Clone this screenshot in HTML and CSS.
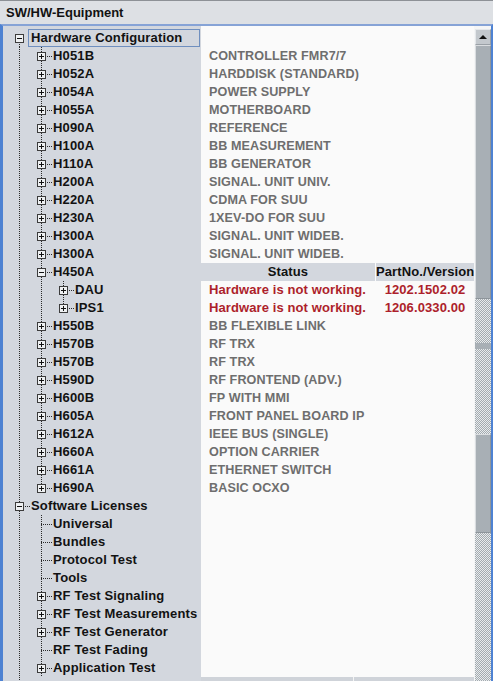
FILE: index.html
```html
<!DOCTYPE html>
<html>
<head>
<meta charset="utf-8">
<link rel="stylesheet" href="styles.css">
</head>
<body>
<div class="title">SW/HW-Equipment</div>
<div class="panel">
  <div class="list">
    <div class="row"><div class="tree"><span class="j first"><i class="box"></i></span><span class="lbl focus">Hardware Configuration</span></div><div class="val"></div></div>

    <div class="row"><div class="tree"><span class="g v"></span><span class="j tee"><i class="box plus"></i></span><span class="lbl">H051B</span></div><div class="val">CONTROLLER FMR7/7</div></div>
    <div class="row"><div class="tree"><span class="g v"></span><span class="j tee"><i class="box plus"></i></span><span class="lbl">H052A</span></div><div class="val">HARDDISK (STANDARD)</div></div>
    <div class="row"><div class="tree"><span class="g v"></span><span class="j tee"><i class="box plus"></i></span><span class="lbl">H054A</span></div><div class="val">POWER SUPPLY</div></div>
    <div class="row"><div class="tree"><span class="g v"></span><span class="j tee"><i class="box plus"></i></span><span class="lbl">H055A</span></div><div class="val">MOTHERBOARD</div></div>
    <div class="row"><div class="tree"><span class="g v"></span><span class="j tee"><i class="box plus"></i></span><span class="lbl">H090A</span></div><div class="val">REFERENCE</div></div>
    <div class="row"><div class="tree"><span class="g v"></span><span class="j tee"><i class="box plus"></i></span><span class="lbl">H100A</span></div><div class="val">BB MEASUREMENT</div></div>
    <div class="row"><div class="tree"><span class="g v"></span><span class="j tee"><i class="box plus"></i></span><span class="lbl">H110A</span></div><div class="val">BB GENERATOR</div></div>
    <div class="row"><div class="tree"><span class="g v"></span><span class="j tee"><i class="box plus"></i></span><span class="lbl">H200A</span></div><div class="val">SIGNAL. UNIT UNIV.</div></div>
    <div class="row"><div class="tree"><span class="g v"></span><span class="j tee"><i class="box plus"></i></span><span class="lbl">H220A</span></div><div class="val">CDMA FOR SUU</div></div>
    <div class="row"><div class="tree"><span class="g v"></span><span class="j tee"><i class="box plus"></i></span><span class="lbl">H230A</span></div><div class="val">1XEV-DO FOR SUU</div></div>
    <div class="row"><div class="tree"><span class="g v"></span><span class="j tee"><i class="box plus"></i></span><span class="lbl">H300A</span></div><div class="val">SIGNAL. UNIT WIDEB.</div></div>
    <div class="row"><div class="tree"><span class="g v"></span><span class="j tee"><i class="box plus"></i></span><span class="lbl">H300A</span></div><div class="val">SIGNAL. UNIT WIDEB.</div></div>
    <div class="row"><div class="tree"><span class="g v"></span><span class="j tee"><i class="box"></i></span><span class="lbl">H450A</span></div><div class="val hdr"><span class="c-status">Status</span><span class="c-part">PartNo./Version</span></div></div>
    <div class="row"><div class="tree"><span class="g v"></span><span class="g v"></span><span class="j tee"><i class="box plus"></i></span><span class="lbl">DAU</span></div><div class="val err"><span class="c-status">Hardware is not working.</span><span class="c-part">1202.1502.02</span></div></div>
    <div class="row"><div class="tree"><span class="g v"></span><span class="g v"></span><span class="j last"><i class="box plus"></i></span><span class="lbl">IPS1</span></div><div class="val err"><span class="c-status">Hardware is not working.</span><span class="c-part">1206.0330.00</span></div></div>
    <div class="row"><div class="tree"><span class="g v"></span><span class="j tee"><i class="box plus"></i></span><span class="lbl">H550B</span></div><div class="val">BB FLEXIBLE LINK</div></div>
    <div class="row"><div class="tree"><span class="g v"></span><span class="j tee"><i class="box plus"></i></span><span class="lbl">H570B</span></div><div class="val">RF TRX</div></div>
    <div class="row"><div class="tree"><span class="g v"></span><span class="j tee"><i class="box plus"></i></span><span class="lbl">H570B</span></div><div class="val">RF TRX</div></div>
    <div class="row"><div class="tree"><span class="g v"></span><span class="j tee"><i class="box plus"></i></span><span class="lbl">H590D</span></div><div class="val">RF FRONTEND (ADV.)</div></div>
    <div class="row"><div class="tree"><span class="g v"></span><span class="j tee"><i class="box plus"></i></span><span class="lbl">H600B</span></div><div class="val">FP WITH MMI</div></div>
    <div class="row"><div class="tree"><span class="g v"></span><span class="j tee"><i class="box plus"></i></span><span class="lbl">H605A</span></div><div class="val">FRONT PANEL BOARD IP</div></div>
    <div class="row"><div class="tree"><span class="g v"></span><span class="j tee"><i class="box plus"></i></span><span class="lbl">H612A</span></div><div class="val">IEEE BUS (SINGLE)</div></div>
    <div class="row"><div class="tree"><span class="g v"></span><span class="j tee"><i class="box plus"></i></span><span class="lbl">H660A</span></div><div class="val">OPTION CARRIER</div></div>
    <div class="row"><div class="tree"><span class="g v"></span><span class="j tee"><i class="box plus"></i></span><span class="lbl">H661A</span></div><div class="val">ETHERNET SWITCH</div></div>
    <div class="row"><div class="tree"><span class="g v"></span><span class="j last"><i class="box plus"></i></span><span class="lbl">H690A</span></div><div class="val">BASIC OCXO</div></div>

    <div class="row"><div class="tree"><span class="j tee"><i class="box"></i></span><span class="lbl">Software Licenses</span></div><div class="val"></div></div>
    <div class="row"><div class="tree"><span class="g v"></span><span class="j tee"></span><span class="lbl">Universal</span></div><div class="val"></div></div>
    <div class="row"><div class="tree"><span class="g v"></span><span class="j tee"></span><span class="lbl">Bundles</span></div><div class="val"></div></div>
    <div class="row"><div class="tree"><span class="g v"></span><span class="j tee"></span><span class="lbl">Protocol Test</span></div><div class="val"></div></div>
    <div class="row"><div class="tree"><span class="g v"></span><span class="j tee"></span><span class="lbl">Tools</span></div><div class="val"></div></div>
    <div class="row"><div class="tree"><span class="g v"></span><span class="j tee"><i class="box plus"></i></span><span class="lbl">RF Test Signaling</span></div><div class="val"></div></div>
    <div class="row"><div class="tree"><span class="g v"></span><span class="j tee"><i class="box plus"></i></span><span class="lbl">RF Test Measurements</span></div><div class="val"></div></div>
    <div class="row"><div class="tree"><span class="g v"></span><span class="j tee"><i class="box plus"></i></span><span class="lbl">RF Test Generator</span></div><div class="val"></div></div>
    <div class="row"><div class="tree"><span class="g v"></span><span class="j tee"></span><span class="lbl">RF Test Fading</span></div><div class="val"></div></div>
    <div class="row"><div class="tree"><span class="g v"></span><span class="j tee"><i class="box plus"></i></span><span class="lbl">Application Test</span></div><div class="val"></div></div>
    <div class="row strip"><div class="tree"><span class="g v"></span></div><div class="val"><span class="seg a"></span><span class="seg b"></span></div></div>
  </div>
  <div class="sb">
    <div class="sb-btn"><span class="tri"></span></div>
    <div class="sb-track">
      <div class="thumb t1"></div>
      <div class="gap g1"></div>
      <div class="band"></div>
      <div class="gap g2"></div>
      <div class="thumb t2"></div>
    </div>
  </div>
</div>
</body>
</html>
```

FILE: styles.css
```css
html, body {
  margin: 0;
  padding: 0;
}
body {
  width: 493px;
  height: 681px;
  overflow: hidden;
  background: #dcdfe3;
  font-family: "Liberation Sans", Arial, sans-serif;
  font-weight: bold;
  color: #121212;
}
.title {
  height: 23px;
  border-top: 1px solid #8d9196;
  line-height: 24px;
  padding-left: 6px;
  font-size: 13px;
  background: #dde0e4;
}
.panel {
  display: flex;
  height: 655px;
  border-top: 2px solid #86a3d6;
  border-left: 3px solid #4e82d2;
  border-right: 2px solid #4e82d2;
  overflow: hidden;
}
.list {
  width: 471px;
  padding-top: 3px;
  background: linear-gradient(to right, #d3d7de 198px, #fafafa 198px);
  display: flex;
  flex-direction: column;
}
.row {
  display: flex;
  height: 18px;
  flex: none;
}
.row.strip {
  height: 4px;
}
.tree {
  width: 198px;
  flex: none;
  box-sizing: border-box;
  padding-left: 5px;
  display: flex;
  background: #d3d7de;
  font-size: 13px;
  letter-spacing: 0.15px;
  line-height: 18px;
  white-space: nowrap;
}
.g, .j {
  width: 22px;
  flex: none;
  position: relative;
}
.g.v::before,
.j::before {
  content: "";
  position: absolute;
  left: 11px;
  width: 1px;
  top: 0;
  bottom: 0;
  background-image: linear-gradient(to bottom, #2a2a2a 50%, transparent 50%);
  background-size: 1px 2px;
}
.j.first::before {
  top: 9px;
}
.j.last::before {
  bottom: 9px;
}
.j::after {
  content: "";
  position: absolute;
  left: 11px;
  right: 0;
  top: 9px;
  height: 1px;
  background-image: linear-gradient(to right, #2a2a2a 50%, transparent 50%);
  background-size: 2px 1px;
}
.j.first::after {
  display: none;
}
.box {
  position: absolute;
  left: 7px;
  top: 5px;
  width: 7px;
  height: 7px;
  border: 1px solid #3c3c3c;
  background: #eef0f2;
  z-index: 1;
}
.box::before {
  content: "";
  position: absolute;
  left: 1px;
  top: 3px;
  width: 5px;
  height: 1px;
  background: #111;
}
.box.plus::after {
  content: "";
  position: absolute;
  left: 3px;
  top: 1px;
  width: 1px;
  height: 5px;
  background: #111;
}
.lbl {
  padding-left: 1px;
}
.lbl.focus {
  flex: 1;
  margin-left: -2px;
  margin-right: 1px;
  padding-left: 2px;
  border: 1px solid #6f8fbf;
  line-height: 16px;
}
.val {
  flex: 1;
  background: #fafafa;
  display: flex;
  padding-left: 8px;
  font-size: 12.6px;
  line-height: 18px;
  color: #6e6e6e;
  letter-spacing: 0.1px;
  white-space: nowrap;
}
.val.hdr,
.val.err {
  padding-left: 0;
}
.c-status {
  width: 174px;
  flex: none;
  margin-right: 1px;
}
.c-part {
  flex: 1;
  text-align: center;
}
.hdr span {
  background: #d3d7de;
  color: #111;
  text-align: center;
  font-size: 13px;
}
.err {
  color: #ad1f2b;
  font-size: 13px;
}
.err .c-status {
  padding-left: 8px;
  box-sizing: border-box;
}
.strip .val {
  background: #cfd3d9;
  padding-left: 0;
}
.seg.a {
  width: 152px;
  border-right: 1px solid #f4f4f4;
}
.sb {
  width: 17px;
  flex: none;
  display: flex;
  flex-direction: column;
  padding-top: 3px;
  background: #f4f5f6;
}
.sb-btn {
  height: 16px;
  flex: none;
  box-sizing: border-box;
  margin-left: 1px;
  border: 1px solid #e4e7ea;
  border-right-color: #9aa0a6;
  border-bottom-color: #9aa0a6;
  background: #c3c8cd;
  display: flex;
  align-items: center;
  justify-content: center;
}
.tri {
  width: 0;
  height: 0;
  border-left: 4px solid transparent;
  border-right: 4px solid transparent;
  border-bottom: 4px solid #111;
}
.sb-track {
  flex: 1;
  margin-left: 1px;
  display: flex;
  flex-direction: column;
  background-color: #e9ebed;
  background-image: repeating-conic-gradient(#a3abb0 0 25%, #e9ebed 0 50%);
  background-size: 2px 2px;
}
.thumb {
  flex: none;
  box-sizing: border-box;
  background: #a8afb5;
  border: 1px solid #dadde0;
  border-bottom-color: #8e959b;
  border-right-color: #8e959b;
}
.t1 {
  height: 254px;
}
.g1 {
  height: 44px;
}
.band {
  height: 6px;
  background: #a8afb5;
}
.g2 {
  height: 85px;
}
.t2 {
  height: 99px;
}
```
